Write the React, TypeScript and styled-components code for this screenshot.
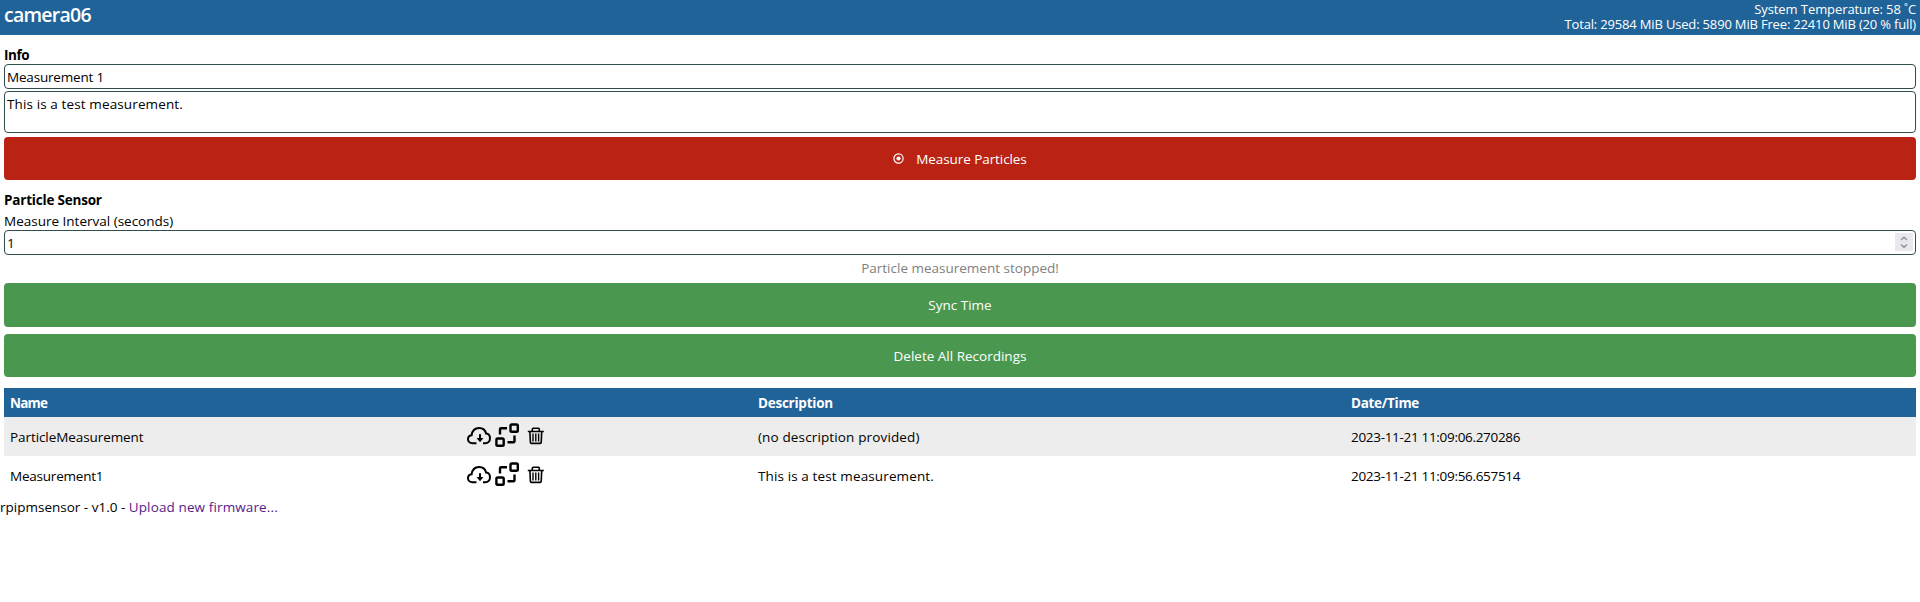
import React from 'react';
import styled, { createGlobalStyle } from 'styled-components';

const GlobalStyle = createGlobalStyle`
  *, *::before, *::after { box-sizing: border-box; }
  body {
    margin: 0;
    background: #fff;
    color: #000;
    font-family: "Trebuchet MS", "Open Sans", "Noto Sans", sans-serif;
    font-size: 13.5px;
    line-height: 18px;
  }
`;

const Text = styled.span<{ $track?: number }>`
  letter-spacing: ${p => p.$track ?? 0}px;
  white-space: pre;
`;

const Header = styled.header`
  display: flex;
  justify-content: space-between;
  height: 35px;
  padding: 0 4px;
  background: #206399;
  color: #fff;
`;

const Title = styled.h1`
  margin: 0;
  font-size: 19.5px;
  font-weight: 600;
  line-height: 29px;
  letter-spacing: -0.75px;
`;

const Status = styled.div`
  display: flex;
  flex-direction: column;
  align-items: flex-end;
  padding-top: 2px;
  font-size: 13px;
  line-height: 15px;
`;

const Main = styled.main`
  display: flex;
  flex-direction: column;
  padding: 11px 4px 0;
`;

const SectionTitle = styled.h2`
  margin: 0;
  font-size: 13.5px;
  font-weight: 700;
  line-height: 18px;
`;

const Field = styled.div<{ $height: number }>`
  display: flex;
  justify-content: space-between;
  height: ${p => p.$height}px;
  border: 1px solid #2f4f4f;
  border-radius: 4px;
  background: #fff;
`;

const TextInput = styled.input<{ $track?: number }>`
  flex: 1;
  min-width: 0;
  padding: 1px 2px;
  border: 0;
  outline: 0;
  background: transparent;
  color: #000;
  font: inherit;
  letter-spacing: ${p => p.$track ?? 0}px;
`;

const TextArea = styled.textarea`
  flex: 1;
  padding: 3px 2px 0;
  border: 0;
  outline: 0;
  resize: none;
  background: transparent;
  color: #000;
  font: inherit;
  letter-spacing: 0.12px;
`;

const Spinner = styled.div`
  display: flex;
  align-items: center;
  justify-content: center;
  width: 18px;
  height: 18px;
  margin: 2px 2px 0 0;
  background: #e9e9ed;
`;

const Button = styled.button<{ $color: string; $height: number }>`
  display: flex;
  align-items: center;
  justify-content: center;
  gap: 12px;
  height: ${p => p.$height}px;
  padding: 0;
  border: 0;
  border-radius: 4px;
  background: ${p => p.$color};
  color: #fff;
  font: inherit;
`;

const Message = styled.p`
  margin: 4px 0 6px;
  color: #808080;
  text-align: center;
`;

const Stack = styled.div<{ $gap: number; $top?: number }>`
  display: flex;
  flex-direction: column;
  gap: ${p => p.$gap}px;
  margin-top: ${p => p.$top ?? 0}px;
`;

const Table = styled.div`
  margin-top: 11px;
`;

const Row = styled.div<{ $kind: 'head' | 'odd' | 'even' }>`
  display: grid;
  grid-template-columns: 463px 285px 593px 1fr;
  align-items: center;
  height: ${p => (p.$kind === 'head' ? 29 : 39)}px;
  background: ${p => ({ head: '#206399', odd: '#ededed', even: '#fff' })[p.$kind]};
  color: ${p => (p.$kind === 'head' ? '#fff' : '#000')};
  font-weight: ${p => (p.$kind === 'head' ? 700 : 400)};
`;

const Cell = styled.div`
  padding-left: 6px;
`;

const Actions = styled.div`
  display: flex;
  align-items: center;
  height: 24px;
  margin-top: -4px;
  gap: 4px;
`;

const Footer = styled.footer`
  padding-top: 3px;
`;

const Link = styled.a`
  color: #551a8b;
  text-decoration: none;
`;

const RecordIcon = () => (
  <svg width="11" height="11" viewBox="0 0 11 11">
    <circle cx="5.5" cy="5.5" r="4.6" fill="none" stroke="#fff" strokeWidth="1.2" />
    <circle cx="5.5" cy="5.5" r="2.1" fill="#fff" />
  </svg>
);

const CloudIcon = () => (
  <svg width="24" height="24" viewBox="0 0 24 24" fill="none" stroke="#000" strokeWidth="2">
    <path d="M9.5 20.2H5.4C2.9 20.2 1 18.5 1 16.2c0-2.1 1.5-3.6 3.6-3.9C5.2 7.7 8.2 4.9 12.1 4.9c3.6 0 6.2 2.2 7 5.6 2.5.3 3.9 2.2 3.9 4.7 0 2.9-1.9 5-4.8 5H16" />
    <path d="M13 11.3v5.500" />
    <path d="M9.600 15h6.800L13 19.200z" fill="#000" stroke="none" />
  </svg>
);

const TransferIcon = () => (
  <svg width="24" height="24" viewBox="0 0 24 24" fill="none" stroke="#000" strokeWidth="2.4">
    <rect x="15.5" y="1.5" width="7.3" height="7.3" rx="1.3" />
    <rect x="1.4" y="15.5" width="7.3" height="7.3" rx="1.3" />
    <path d="M5 11.500V6.200q0-1 1-1h6M12.500 19.200h6q1 0 1-1v-5.700" />
  </svg>
);

const TrashIcon = () => (
  <svg width="24" height="24" viewBox="0 0 24 24" fill="none" stroke="#000" strokeWidth="1.600">
    <path d="M4.800 8.500h16M9.300 8.200V6.200q0-1 1-1h5q1 0 1 1v2M6.900 8.800l.5 10.700q.1.900 1 .9h8.800q.9 0 1-.9l.5-10.700" />
    <path d="M10 10.500v8M12.800 10.500v8M15.600 10.500v8" strokeWidth="1.400" />
  </svg>
);

const SpinArrows = () => (
  <svg width="8" height="12" viewBox="0 0 8 12" fill="none" stroke="#8f8f9d" strokeWidth="1.5">
    <path d="M1 4l3-2.800L7 4M1 8.500l3 2.800 3-2.800" />
  </svg>
);

const recordings = [
  { name: 'ParticleMeasurement', nameTrack: -0.08, text: '(no description provided)', textTrack: 0.14, date: '2023-11-21 11:09:06.270286' },
  { name: 'Measurement1', nameTrack: -0.22, text: 'This is a test measurement.', textTrack: 0.12, date: '2023-11-21 11:09:56.657514' },
];

export default function App() {
  return (
    <>
      <GlobalStyle />
      <Header>
        <Title>camera06</Title>
        <Status>
          <Text $track={-0.08}>System Temperature: 58 ˚C</Text>
          <Text $track={-0.17}>Total: 29584 MiB Used: 5890 MiB Free: 22410 MiB (20 % full)</Text>
        </Status>
      </Header>
      <Main>
        <SectionTitle><Text $track={-0.4}>Info</Text></SectionTitle>
        <Stack $gap={2}>
          <Field $height={25}><TextInput $track={-0.18} defaultValue="Measurement 1" /></Field>
          <Field $height={42}><TextArea defaultValue="This is a test measurement." /></Field>
        </Stack>
        <Stack $gap={0} $top={4}>
          <Button $color="#ba2313" $height={43}>
            <RecordIcon />
            <Text $track={-0.08}>Measure Particles</Text>
          </Button>
        </Stack>
        <Stack $gap={3} $top={11}>
          <SectionTitle><Text $track={-0.2}>Particle Sensor</Text></SectionTitle>
          <Text>Measure Interval (seconds)</Text>
        </Stack>
        <Field $height={25}>
          <TextInput defaultValue="1" />
          <Spinner><SpinArrows /></Spinner>
        </Field>
        <Message>Particle measurement stopped!</Message>
        <Stack $gap={7}>
          <Button $color="#4a9850" $height={44}><Text>Sync Time</Text></Button>
          <Button $color="#4a9850" $height={43}><Text>Delete All Recordings</Text></Button>
        </Stack>
        <Table>
          <Row $kind="head">
            <Cell><Text $track={-0.8}>Name</Text></Cell>
            <Cell />
            <Cell><Text $track={-0.25}>Description</Text></Cell>
            <Cell><Text $track={-0.3}>Date/Time</Text></Cell>
          </Row>
          {recordings.map((r, i) => (
            <Row key={r.name} $kind={i % 2 ? 'even' : 'odd'}>
              <Cell><Text $track={r.nameTrack}>{r.name}</Text></Cell>
              <Actions><CloudIcon /><TransferIcon /><TrashIcon /></Actions>
              <Cell><Text $track={r.textTrack}>{r.text}</Text></Cell>
              <Cell><Text $track={-0.31}>{r.date}</Text></Cell>
            </Row>
          ))}
        </Table>
      </Main>
      <Footer>
        <Text>rpipmsensor - v1.0 - </Text>
        <Link href="#"><Text $track={0.12}>Upload new firmware...</Text></Link>
      </Footer>
    </>
  );
}
